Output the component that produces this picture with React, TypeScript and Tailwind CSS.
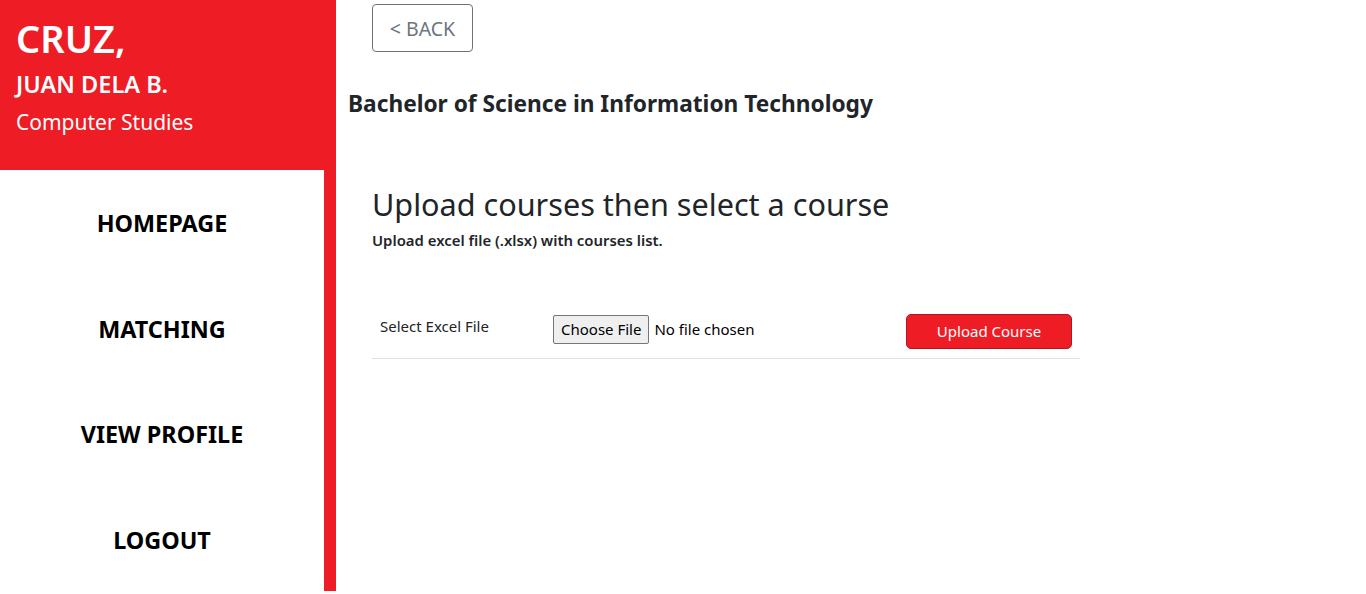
import React from "react";

export default function App() {
  const font = { fontFamily: '"Noto Sans", "Open Sans", sans-serif' };
  return (
    <div className="flex w-[1366px] h-[594px] bg-white overflow-hidden" style={font}>
      <aside className="w-[336px] flex flex-col shrink-0 h-[591px]">
        <div className="bg-[#ee1c25] h-[170px] shrink-0 px-4 pt-[14px] text-white">
          <div className="text-[38px] font-semibold leading-[48px]">CRUZ,</div>
          <div className="text-[23.5px] font-semibold leading-[30px] mt-[7px]">JUAN DELA B.</div>
          <div className="text-[21px] leading-[30px] mt-[8px]">Computer Studies</div>
        </div>
        <div className="flex flex-1 min-h-0 overflow-hidden">
          <nav className="w-[324px] flex flex-col pt-[35px]">
            {["HOMEPAGE", "MATCHING", "VIEW PROFILE", "LOGOUT"].map((t) => (
              <div key={t} className="h-[105.5px] shrink-0 flex items-start justify-center pt-[2px] text-[23.4px] font-bold text-black leading-[32px]">
                {t}
              </div>
            ))}
          </nav>
          <div className="w-[12px] bg-[#ee1c25]" />
        </div>
      </aside>
      <main className="flex-1 pl-[12px] text-[#212529]">
        <div className="pt-[4px] pl-[24px]">
          <button className="w-[101px] h-[48px] pt-[2px] border border-[#6c757d] rounded-[4px] text-[#6c757d] text-[19.5px]">
            &lt; BACK
          </button>
        </div>
        <h2 className="mt-[38px] text-[22.7px] font-bold leading-[28px]">Bachelor of Science in Information Technology</h2>
        <div className="pl-[24px] mt-[66px] w-[732px]">
          <h1 className="text-[30.6px] font-normal leading-[40px]">Upload courses then select a course</h1>
          <p className="text-[14.9px] font-semibold leading-[20px] mt-[6px]">Upload excel file (.xlsx) with courses list.</p>
          <div className="mt-[53px] flex items-start border-b border-[#dee2e6] h-[56px] pt-[6px]">
            <div className="w-[181px] pl-[8px] text-[15px] pt-[7px] leading-[20px]">Select Excel File</div>
            <div className="flex items-center h-[28px] mt-[6px] text-[15px] text-black">
              <span className="border border-[#767676] bg-[#efefef] rounded-[2px] px-[7px] h-[29px] flex items-center">Choose File</span>
              <span className="ml-[5px]">No file chosen</span>
            </div>
            <div className="flex-1" />
            <button className="mt-[5px] mr-[8px] w-[166px] h-[35px] bg-[#ee1c25] border border-[#b0161c] rounded-[5px] text-white text-[15px]">
              Upload Course
            </button>
          </div>
        </div>
      </main>
    </div>
  );
}
